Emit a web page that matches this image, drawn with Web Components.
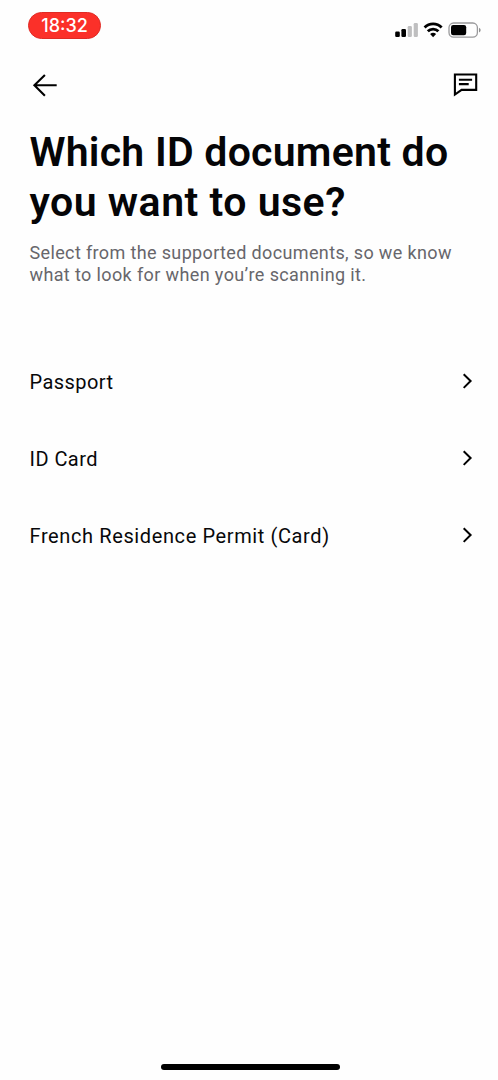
<!DOCTYPE html>
<html lang="en">
<head>
<meta charset="utf-8">
<title>Choose ID document</title>
<style>
html,body{margin:0;background:#fefefe}
body{font-family:Roboto,"Liberation Sans",sans-serif;color:#08080a}
</style>
</head>
<body>
<id-screen>
  <status-bar slot="status">18:32</status-bar>
  <nav-bar slot="nav"></nav-bar>
  <page-heading slot="heading">
    <text-line slot="title" style="--ls:.24px">Which ID document do</text-line>
    <text-line slot="title" style="--ls:.5px">you want to use?</text-line>
    <text-line slot="sub" style="--ls:.36px">Select from the supported documents, so we know</text-line>
    <text-line slot="sub" style="--ls:.38px">what to look for when you’re scanning it.</text-line>
  </page-heading>
  <option-row><text-line style="--ls:.45px">Passport</text-line></option-row>
  <option-row><text-line style="--ls:.45px">ID Card</text-line></option-row>
  <option-row><text-line style="--ls:.61px">French Residence Permit (Card)</text-line></option-row>
</id-screen>
<script>
function define(name, html){
  customElements.define(name, class extends HTMLElement{
    constructor(){ super(); this.attachShadow({mode:'open'}).innerHTML = html; }
  });
}
define('text-line', `<style>:host{display:block;white-space:nowrap;letter-spacing:var(--ls,0)}</style><slot></slot>`);
define('id-screen', `<style>
:host{display:flex;flex-direction:column;width:498px;height:1080px;overflow:hidden}
main{flex:1;padding-top:58px}
footer{height:16px;display:flex;justify-content:center}
i{width:179px;height:6px;border-radius:4px;background:#000;margin-left:3px}
</style><slot name="status"></slot><slot name="nav"></slot><slot name="heading"></slot>
<main><slot></slot></main><footer><i></i></footer>`);
define('status-bar', `<style>
:host{display:flex;justify-content:space-between;align-items:flex-start;height:52px;box-sizing:border-box;padding:12px 16px 0 28px}
.time{width:73px;height:27px;box-sizing:border-box;border-radius:14px;background:#fb3029;border:1px solid #e02a24;color:#fff;text-align:center;font:500 18px/26px Inter,sans-serif}
svg{display:block;margin-top:8px}
</style><div class="time"><slot></slot></div>
<svg width="88" height="20" viewBox="394 20 88 20">
<rect x="395.200" y="31.500" width="4.600" height="5.500" rx="1.2"/><rect x="401.400" y="29" width="4.600" height="8" rx="1.2"/>
<rect x="407.700" y="26" width="4.200" height="11" rx="1.2" fill="#bfbfc0"/><rect x="413.700" y="23" width="4.200" height="14" rx="1.2" fill="#bfbfc0"/>
<g fill="none" stroke="#000" stroke-width="2.9"><path d="M424.6 27.4a12 12 0 0 1 17 0"/><path d="M427.8 31.3a7.6 7.6 0 0 1 10.6 0"/></g>
<path d="M433.1 37.2l-3-3.1a4.4 4.4 0 0 1 6 0z"/>
<rect x="449" y="23" width="28.4" height="14.2" rx="4.6" fill="none" stroke="#99999b" stroke-width="1.3"/>
<rect x="451" y="25" width="15.2" height="10.2" rx="2.2"/><path d="M479.2 27.8c1.8.8 1.8 3.800 0 4.600z" fill="#777"/>
</svg>`);
define('nav-bar', `<style>
:host{display:flex;justify-content:space-between;height:75px;box-sizing:border-box;padding:20px 18px 0 31px}
svg{display:block;fill:none;stroke:#000;stroke-width:2.1}
</style>
<svg width="28" height="28" viewBox="31 72 28 28"><path d="M56.700 85.200H34.500M44.900 74.900L34.400 85.200l10.500 10.500"/></svg>
<svg width="30" height="28" viewBox="450 72 30 28"><path d="M454.900 74.500h21.300v15.400h-14.600l-6.700 4.600zM458.900 79.800h13.200M458.900 84.100h9.800"/></svg>`);
define('page-heading', `<style>
:host{display:block;padding-left:29.500px}
h1{margin:0;font-size:41px;line-height:50px;font-weight:600;color:#050507}
p{margin:15px 0 0;font-size:18px;line-height:22px;color:#67666b}
</style><h1><slot name="title"></slot></h1><p><slot name="sub"></slot></p>`);
define('option-row', `<style>
:host{display:flex;justify-content:space-between;align-items:center;height:77px;padding:0 24px 0 29.500px;font-size:20px;line-height:77px}
svg{display:block;fill:none;stroke:#000;stroke-width:2;margin-top:-3px}
</style><slot></slot>
<svg width="12" height="18" viewBox="0 0 12 18"><path d="M1.700 2.300l6.900 6.700-6.900 6.900"/></svg>`);
</script>
</body>
</html>
